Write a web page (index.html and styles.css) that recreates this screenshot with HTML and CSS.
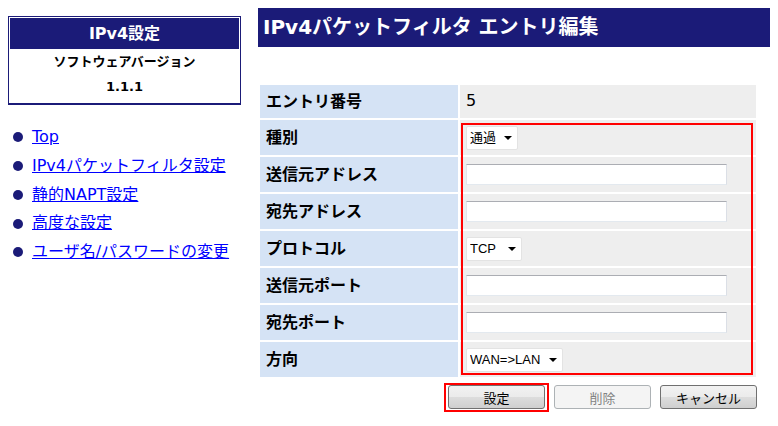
FILE: index.html
```html
<!DOCTYPE html>
<html lang="ja">
<head>
<meta charset="utf-8">
<title>IPv4パケットフィルタ エントリ編集</title>
<link rel="stylesheet" href="styles.css">
</head>
<body>
<div class="page">
  <aside class="side">
    <div class="infobox">
      <div class="infohead">IPv4設定</div>
      <div class="inforow">ソフトウェアバージョン</div>
      <div class="inforow">1.1.1</div>
    </div>
    <ul class="nav">
      <li><a href="#">Top</a></li>
      <li><a href="#">IPv4パケットフィルタ設定</a></li>
      <li><a href="#">静的NAPT設定</a></li>
      <li><a href="#">高度な設定</a></li>
      <li><a href="#">ユーザ名/パスワードの変更</a></li>
    </ul>
  </aside>
  <main class="main">
    <h1 class="title">IPv4パケットフィルタ エントリ編集</h1>
    <div class="formwrap">
      <table class="grid">
        <tr class="first">
          <th>エントリ番号</th>
          <td>5</td>
        </tr>
        <tr>
          <th>種別</th>
          <td><span class="sel"><select class="w-type"><option>通過</option><option>破棄</option></select></span></td>
        </tr>
        <tr>
          <th>送信元アドレス</th>
          <td><input class="txt" type="text"></td>
        </tr>
        <tr>
          <th>宛先アドレス</th>
          <td><input class="txt" type="text"></td>
        </tr>
        <tr>
          <th>プロトコル</th>
          <td><span class="sel"><select class="w-proto"><option>TCP</option><option>UDP</option></select></span></td>
        </tr>
        <tr>
          <th>送信元ポート</th>
          <td><input class="txt" type="text"></td>
        </tr>
        <tr>
          <th>宛先ポート</th>
          <td><input class="txt" type="text"></td>
        </tr>
        <tr>
          <th>方向</th>
          <td><span class="sel"><select class="w-dir"><option>WAN=&gt;LAN</option><option>LAN=&gt;WAN</option></select></span></td>
        </tr>
      </table>
      <div class="highlight"></div>
    </div>
    <div class="actions">
      <span class="marked"><button class="btn" type="button">設定</button></span>
      <button class="btn" type="button" disabled>削除</button>
      <button class="btn" type="button">キャンセル</button>
    </div>
  </main>
</div>
</body>
</html>
```
FILE: styles.css
```css
html {
  min-height: 100%;
}

body {
  margin: 8px;
  min-height: 410px;
  font-family: "DejaVu Sans", "Noto Sans CJK JP", sans-serif;
  font-size: 16px;
  color: #000;
  background: #fff;
}

.page {
  display: flex;
  align-items: flex-start;
  gap: 17px;
}

.side {
  width: 233px;
  flex: none;
}

.infobox {
  margin-top: 8px;
  border: 1px solid #1b1b78;
  border-bottom-width: 2px;
  padding: 1px 1px 4px 1px;
}

.infohead {
  background: #1b1b78;
  color: #fff;
  font-weight: bold;
  font-size: 16px;
  height: 31px;
  line-height: 31px;
  text-align: center;
}

.inforow {
  font-weight: bold;
  font-size: 13px;
  height: 25px;
  line-height: 25px;
  text-align: center;
}

.nav {
  list-style: none;
  margin: 18px 0 0;
  padding: 0 0 0 5px;
}

.nav li {
  display: flex;
  align-items: center;
  gap: 9px;
  height: 28.75px;
  line-height: 28.75px;
}

.nav li::before {
  content: "";
  width: 10px;
  height: 10px;
  border-radius: 50%;
  background: #1b1b78;
  flex: none;
}

.nav a {
  color: #0000ff;
  text-decoration: underline;
}

.main {
  width: 520px;
  flex: none;
}

.title {
  margin: 0;
  height: 39px;
  line-height: 39px;
  padding-left: 5px;
  background: #1b1b78;
  color: #fff;
  font-size: 20px;
  font-weight: bold;
}

.formwrap {
  position: relative;
  margin-top: 36px;
  width: 500px;
}

.grid {
  width: 500px;
  border-spacing: 2px;
  border-collapse: separate;
}

.grid th {
  width: 192px;
  height: 32px;
  padding: 0 0 3px 6px;
  background: #d5e3f5;
  text-align: left;
  font-weight: bold;
  font-size: 16px;
}

.grid td {
  height: 35px;
  padding: 0 6px;
  background: #eeeeee;
  font-size: 16px;
}

.grid tr.first th,
.grid tr.first td {
  height: 30px;
  padding-bottom: 3px;
}

.txt {
  display: block;
  box-sizing: border-box;
  width: 261px;
  height: 21px;
  margin: 0;
  padding: 0 3px;
  border: 1px solid;
  border-color: #abadb3 #dbdfe6 #e3e9ef #e2e3ea;
  background: #fff;
  font-family: "Liberation Sans", "Noto Sans CJK JP", sans-serif;
  font-size: 13px;
}

.sel {
  position: relative;
  display: inline-block;
  vertical-align: middle;
}

.sel select {
  display: block;
  appearance: none;
  -webkit-appearance: none;
  box-sizing: border-box;
  height: 24px;
  margin: 0;
  padding: 0 0 0 3px;
  border: 1px solid #e3e3e3;
  border-radius: 2px;
  background: #fff;
  color: #000;
  font-family: "Liberation Sans", "Noto Sans CJK JP", sans-serif;
  font-size: 13px;
}

.sel::after {
  content: "";
  position: absolute;
  right: 6px;
  top: 10px;
  border-left: 4px solid transparent;
  border-right: 4px solid transparent;
  border-top: 4px solid #000;
  pointer-events: none;
}

.w-type { width: 52px; }
.w-proto { width: 56px; }
.w-dir { width: 97px; }

.highlight {
  position: absolute;
  left: 203px;
  top: 40px;
  width: 292px;
  height: 252px;
  box-sizing: border-box;
  border: 2px solid #ff0000;
  pointer-events: none;
}

.actions {
  display: flex;
  justify-content: flex-end;
  align-items: flex-start;
  gap: 9px;
  width: 499px;
  margin-top: 6px;
}

.btn {
  box-sizing: border-box;
  width: 97px;
  height: 24px;
  margin: 0;
  padding: 0;
  border: 1px solid #707070;
  border-radius: 3px;
  background: linear-gradient(#f2f2f2, #ebebeb 50%, #dddddd 50%, #cfcfcf);
  color: #000;
  font-family: "Liberation Sans", "Noto Sans CJK JP", sans-serif;
  font-size: 13px;
}

.btn:disabled {
  border-color: #adb2b5;
  background: #f4f4f4;
  color: #838383;
}

.marked {
  display: flex;
  padding: 0 2px 1px 2px;
  margin: -2px -4px -3px -4px;
  border: 2px solid #ff0000;
}
```
